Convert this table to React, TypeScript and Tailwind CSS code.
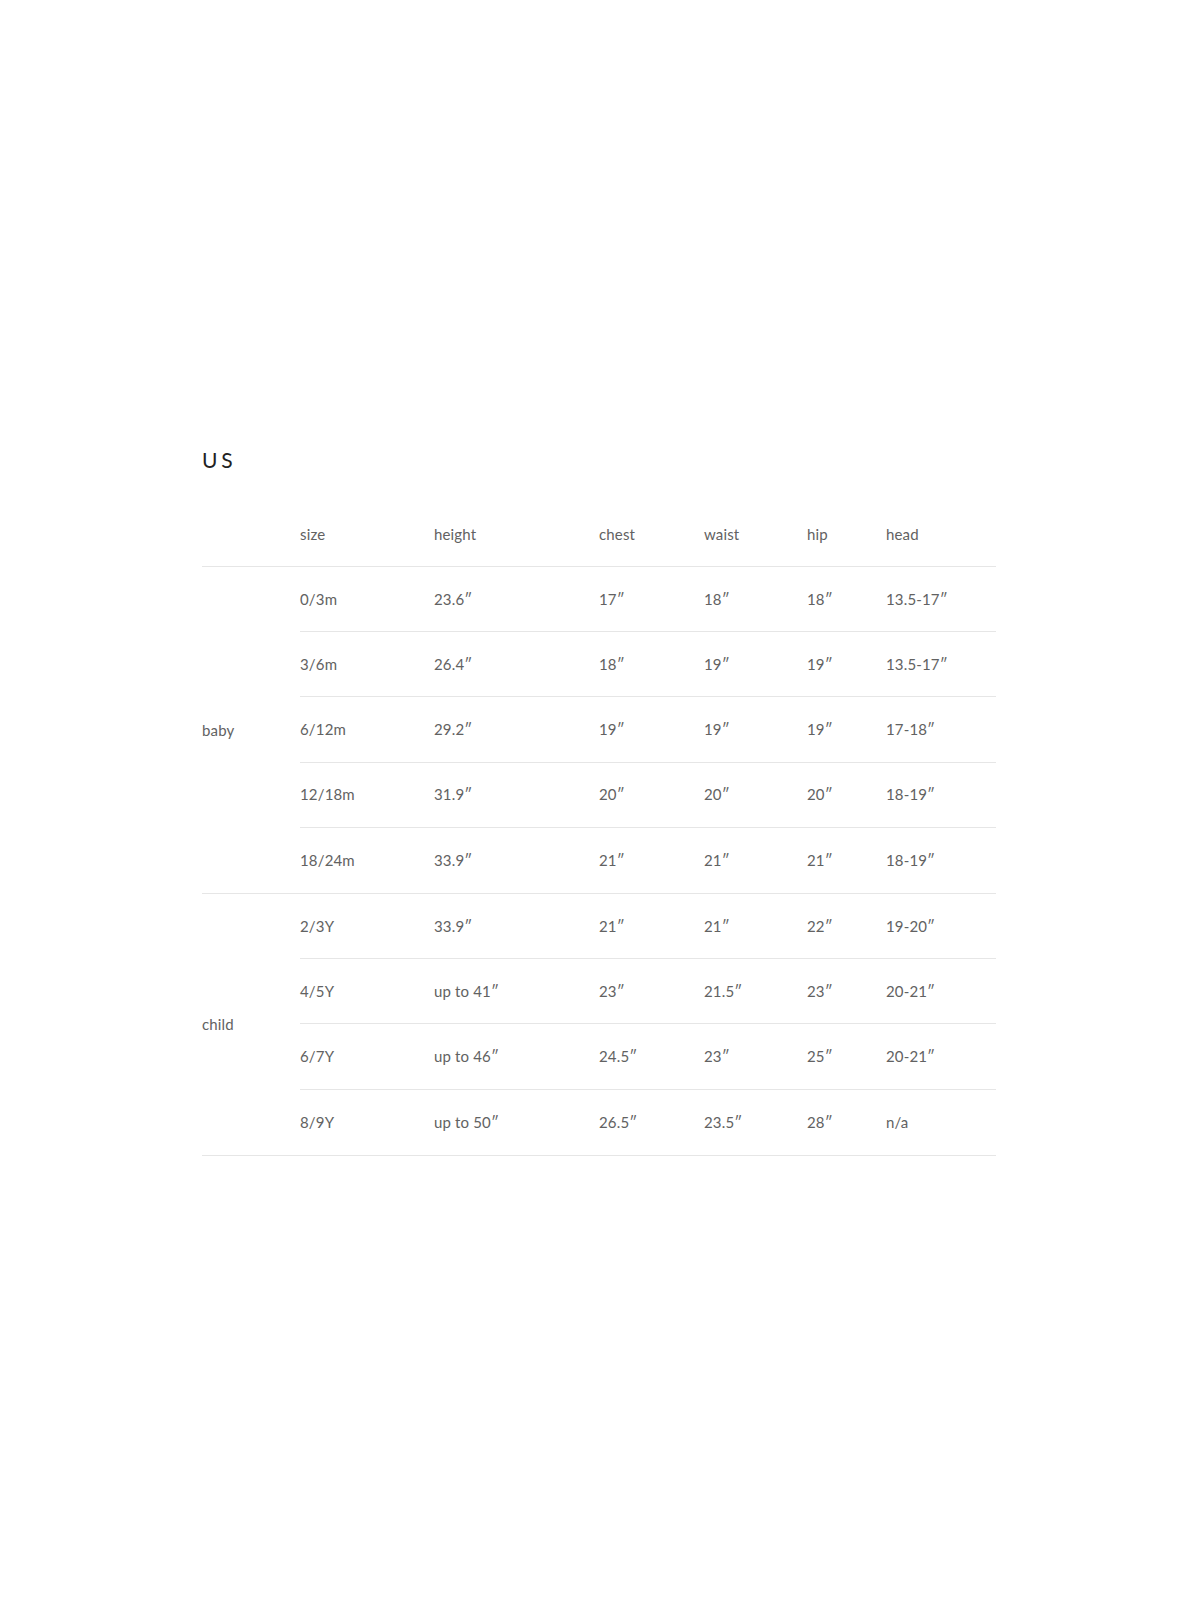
import React from "react";

const cols = ["w-[134px]", "w-[165px]", "w-[105px]", "w-[103px]", "w-[79px]", "w-[110px]"];

const groups: { label: string; rows: string[][] }[] = [
  {
    label: "baby",
    rows: [
      ["0/3m", "23.6\u2033", "17\u2033", "18\u2033", "18\u2033", "13.5-17\u2033"],
      ["3/6m", "26.4\u2033", "18\u2033", "19\u2033", "19\u2033", "13.5-17\u2033"],
      ["6/12m", "29.2\u2033", "19\u2033", "19\u2033", "19\u2033", "17-18\u2033"],
      ["12/18m", "31.9\u2033", "20\u2033", "20\u2033", "20\u2033", "18-19\u2033"],
      ["18/24m", "33.9\u2033", "21\u2033", "21\u2033", "21\u2033", "18-19\u2033"],
    ],
  },
  {
    label: "child",
    rows: [
      ["2/3Y", "33.9\u2033", "21\u2033", "21\u2033", "22\u2033", "19-20\u2033"],
      ["4/5Y", "up to 41\u2033", "23\u2033", "21.5\u2033", "23\u2033", "20-21\u2033"],
      ["6/7Y", "up to 46\u2033", "24.5\u2033", "23\u2033", "25\u2033", "20-21\u2033"],
      ["8/9Y", "up to 50\u2033", "26.5\u2033", "23.5\u2033", "28\u2033", "n/a"],
    ],
  },
];

const headers = ["size", "height", "chest", "waist", "hip", "head"];

export default function App() {
  return (
    <div
      className="min-h-[1600px] bg-white text-[#626262]"
      style={{ fontFamily: "Lato, 'Open Sans', sans-serif" }}
    >
      <div className="mx-auto w-[794px] pt-[440px] translate-x-[-1px]">
        <h2 className="text-[21px] leading-[40px] tracking-[0.18em] text-[#222222] font-normal">US</h2>
        <div className="mt-[26px] flex h-[61px] items-center border-b border-[#e6e6e6] text-[15px] pb-[4px] tracking-[0.01em]">
          <div className="w-[98px]" />
          {headers.map((h, i) => (
            <div key={h} className={cols[i]}>
              {h}
            </div>
          ))}
        </div>
        {groups.map((g) => (
          <div key={g.label} className="flex border-b border-[#e6e6e6] text-[15px] tracking-[0.01em]">
            <div className="w-[98px] flex items-center">{g.label}</div>
            <div className="flex-1 flex flex-col">
              {g.rows.map((r, ri) => (
                <div
                  key={ri}
                  className={
                    "flex items-center h-[65.2px] " +
                    (ri < g.rows.length - 1 ? "border-b border-[#e6e6e6]" : "")
                  }
                >
                  {r.map((c, ci) => (
                    <div key={ci} className={cols[ci]}>
                      {c}
                    </div>
                  ))}
                </div>
              ))}
            </div>
          </div>
        ))}
      </div>
    </div>
  );
}
